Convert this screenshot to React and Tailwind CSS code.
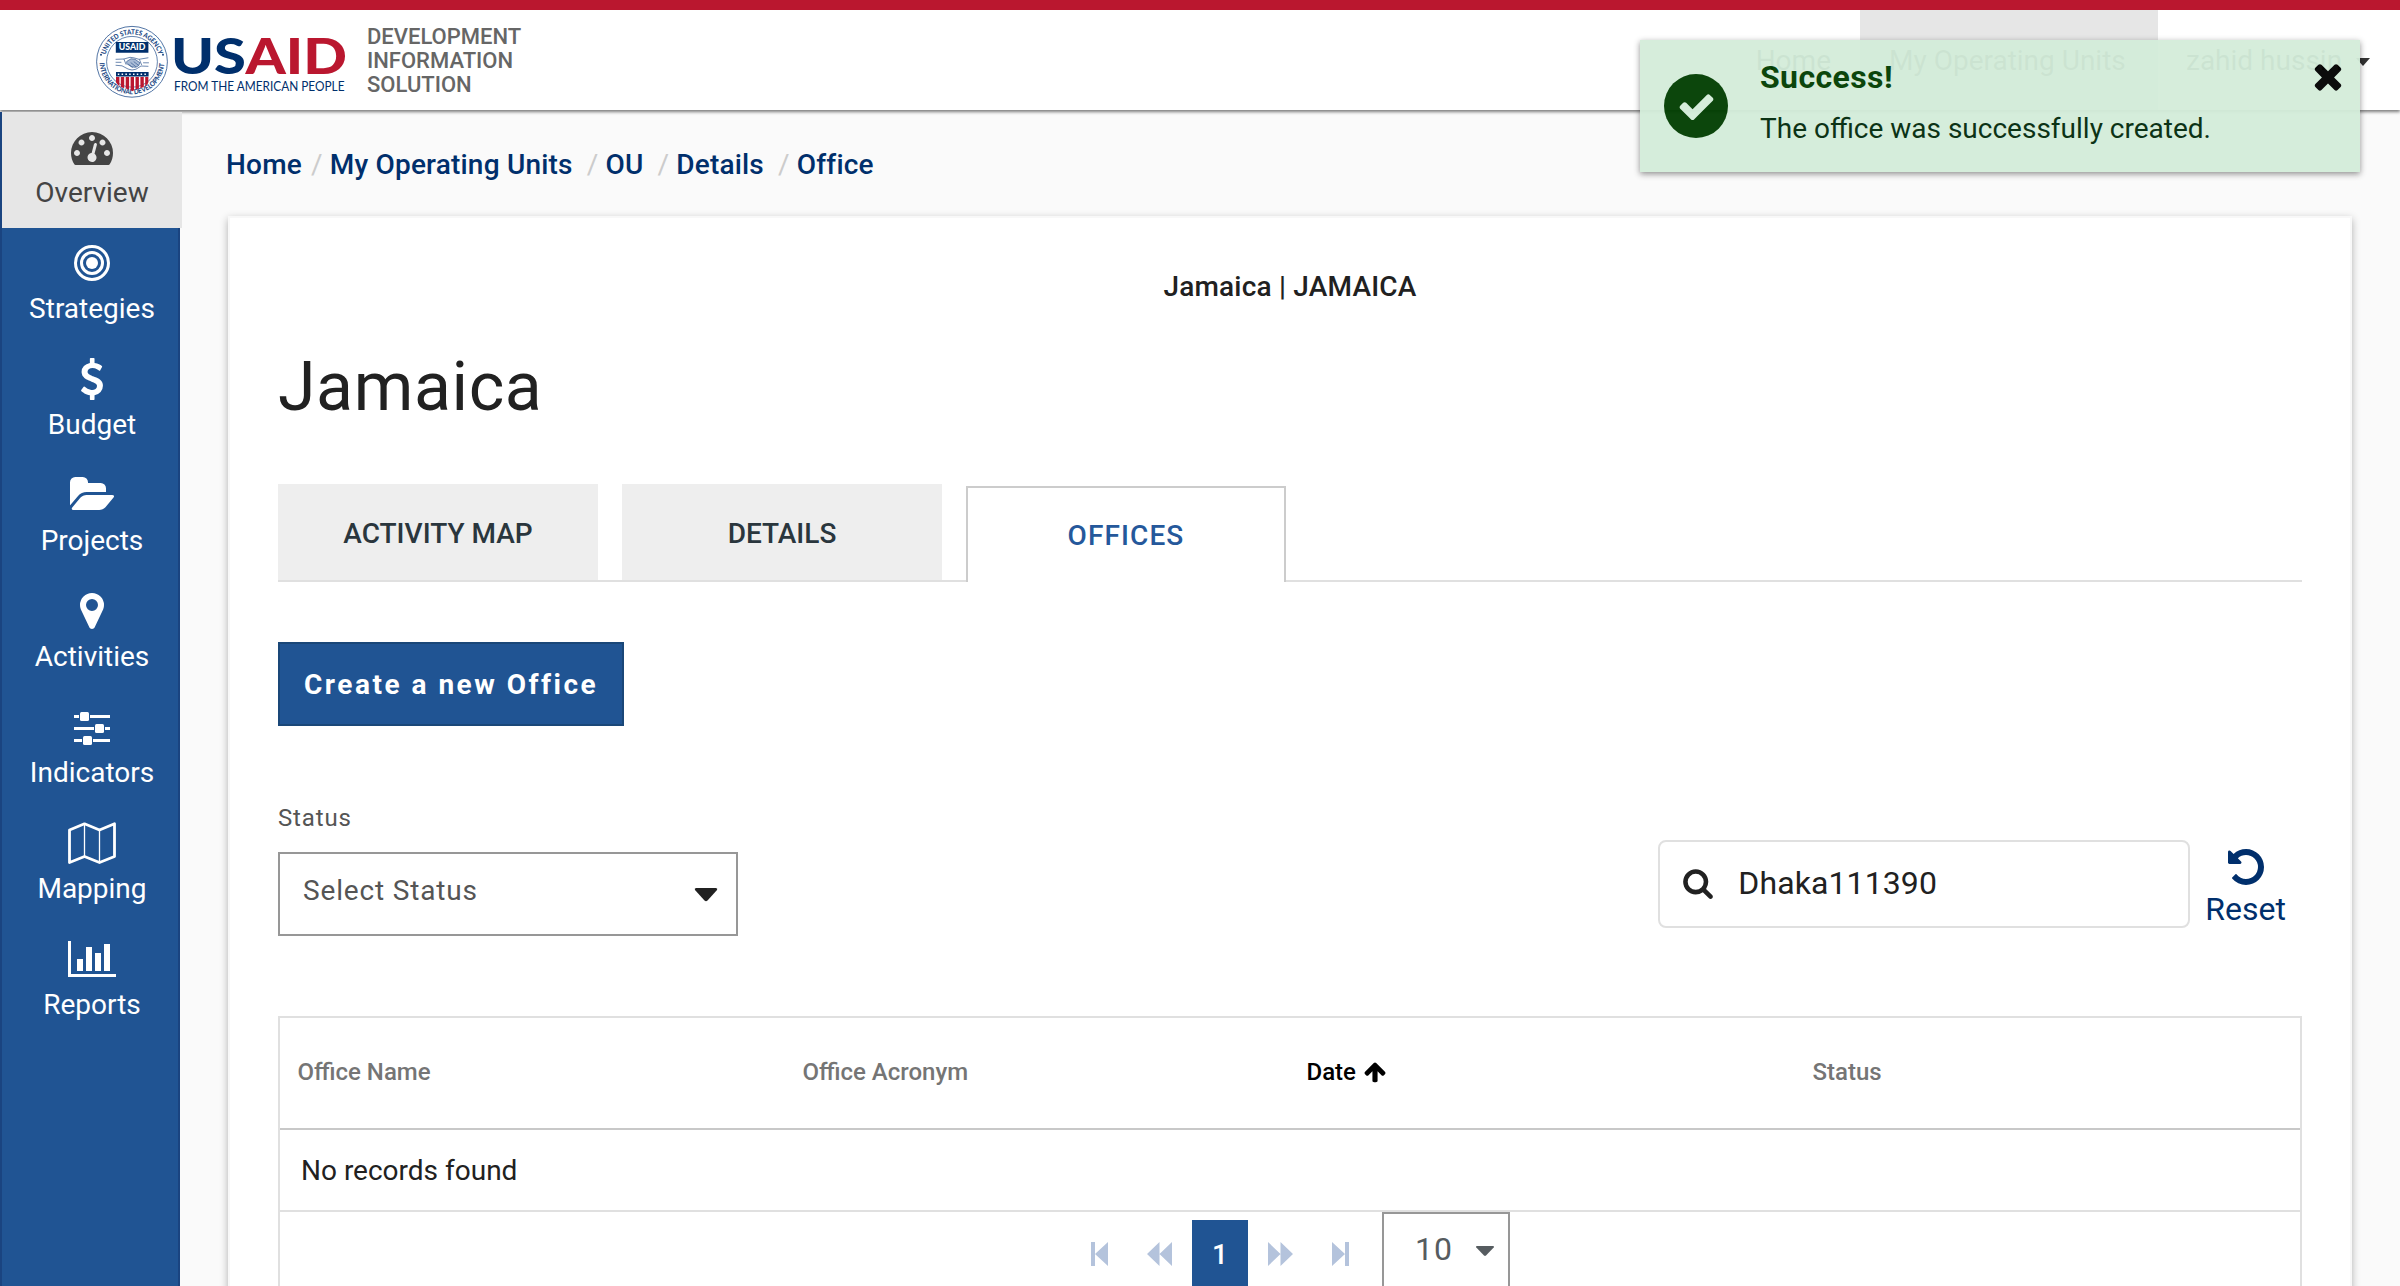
import React from "react";

const FA = {
  tachometer: "M384 1152q0-53-37.5-90.5t-90.5-37.5-90.5 37.5-37.5 90.5 37.5 90.5 90.5 37.5 90.5-37.5 37.5-90.5zm192-448q0-53-37.5-90.5t-90.5-37.5-90.5 37.5-37.5 90.5 37.5 90.5 90.5 37.5 90.5-37.5 37.5-90.5zm428 481l101-382q6-26-7.5-48.5t-38.5-29.5-48 6.5-30 39.5l-101 382q-60 5-107 43.5t-63 98.5q-20 77 20 146t117 89 146-20 89-117q16-60-6-117t-72-91zm660-33q0-53-37.5-90.5t-90.5-37.5-90.5 37.5-37.5 90.5 37.5 90.5 90.5 37.5 90.5-37.5 37.5-90.5zm-640-640q0-53-37.5-90.5t-90.5-37.5-90.5 37.5-37.5 90.5 37.5 90.5 90.5 37.5 90.5-37.5 37.5-90.5zm448 192q0-53-37.5-90.5t-90.5-37.5-90.5 37.5-37.5 90.5 37.5 90.5 90.5 37.5 90.5-37.5 37.5-90.5zm320 448q0 261-141 483-19 29-54 29h-1402q-35 0-54-29-141-221-141-483 0-182 71-348t191-286 286-191 348-71 348 71 286 191 191 286 71 348z",
  dollar: "M1362 1185q0 153-99.5 263.5t-258.5 136.5v175q0 14-9 23t-23 9h-135q-13 0-22.5-9.5t-9.5-22.5v-175q-66-9-127.5-31t-101.5-44.5-74-48-46.5-37.5-17.5-18q-17-21-2-41l103-135q7-10 23-12 15-2 24 9l2 2q113 99 243 125 37 8 74 8 81 0 142.5-43t61.5-122q0-28-15-53t-33.5-42-58.5-37.5-66-32-80-32.5q-39-16-61.5-25t-61.5-26.5-62.5-31-56.5-35.5-53.5-42.5-43.5-49-35.5-58-21-66.5-8.5-78q0-138 98-242t255-134v-180q0-13 9.5-22.5t22.5-9.5h135q14 0 23 9t9 23v176q57 6 110.5 23t87 33.5 63.5 37.5 39 29 15 14q17 18 5 38l-81 146q-8 15-23 16-14 3-27-7-3-3-14.5-12t-39-26.5-58.5-32-74.5-26-85.5-11.5q-95 0-155 43t-60 111q0 26 8.5 48t29.5 41.5 39.5 33 56 31 60.5 27 70 27.5q53 20 81 31.5t76 35 75.5 42.5 62 50 53 63.5 31.5 76.5 13 94z",
  folder: "M1815 952q0 31-31 66l-336 396q-43 51-120.5 86.5t-143.5 35.5h-1088q-34 0-60.5-13t-26.5-43q0-31 31-66l336-396q43-51 120.5-86.5t143.5-35.5h1088q34 0 60.5 13t26.5 43zm-343-344v160h-832q-94 0-197 47.5t-164 119.5l-337 396-5 6q0-4-.5-12.5t-.5-12.5v-960q0-92 66-158t158-66h320q92 0 158 66t66 158v32h544q92 0 158 66t66 158z",
  marker: "M1152 640q0-106-75-181t-181-75-181 75-75 181 75 181 181 75 181-75 75-181zm256 0q0 109-33 179l-364 774q-16 33-47.5 52t-67.5 19-67.5-19-46.5-52l-365-774q-33-70-33-179 0-212 150-362t362-150 362 150 150 362z",
  chart: "M640 896v512h-256v-512h256zm384-512v1024h-256v-1024h256zm1024 1152v128h-2048v-1536h128v1408h1920zm-640-896v768h-256v-768h256zm384-384v1152h-256v-1152h256z",
  search: "M1216 832q0-185-131.5-316.5t-316.5-131.5-316.5 131.5-131.5 316.5 131.5 316.5 316.5 131.5 316.5-131.5 131.5-316.5zm512 832q0 52-38 90t-90 38q-54 0-90-38l-343-342q-179 124-399 124-143 0-273.5-55.5t-225-150-150-225-55.5-273.5 55.5-273.5 150-225 225-150 273.5-55.5 273.5 55.5 225 150 150 225 55.5 273.5q0 220-124 399l343 343q37 37 37 90z",
  undo: "M1664 896q0 156-61 298t-164 245-245 164-298 61q-172 0-327-72.5t-264-204.5q-7-10-6.5-22.5t8.5-20.5l137-138q10-9 25-9 16 2 23 12 73 95 179 147t225 52q104 0 198.5-40.5t163.5-109.5 109.5-163.5 40.5-198.5-40.5-198.5-109.5-163.5-163.5-109.5-198.5-40.5q-98 0-188 35.5t-160 101.5l137 138q31 30 14 69-17 40-59 40h-448q-26 0-45-19t-19-45v-448q0-42 40-59 39-17 69 14l130 129q107-101 244.5-156.5t284.5-55.5q156 0 298 61t245 164 164 245 61 298z",
  check: "M1671 566q0 40-28 68l-724 724-136 136q-28 28-68 28t-68-28l-136-136-362-362q-28-28-28-68t28-68l136-136q28-28 68-28t68 28l294 295 656-657q28-28 68-28t68 28l136 136q28 28 28 68z",
  times: "M1490 1322q0 40-28 68l-136 136q-28 28-68 28t-68-28l-294-294-294 294q-28 28-68 28t-68-28l-136-136q-28-28-28-68t28-68l294-294-294-294q-28-28-28-68t28-68l136-136q28-28 68-28t68 28l294 294 294-294q28-28 68-28t68 28l136 136q28 28 28 68t-28 68l-294 294 294 294q28 28 28 68z",
  arrowUp: "M1675 971q0 51-37 90l-75 75q-38 38-91 38-54 0-90-38l-294-293v704q0 52-37.5 84.5t-90.5 32.5h-128q-53 0-90.5-32.5t-37.5-84.5v-704l-294 293q-36 38-90 38t-90-38l-75-75q-38-38-38-90 0-53 38-91l651-651q35-37 90-37 54 0 91 37l651 651q37 39 37 91z",
};

function Glyph({ name, className, viewBox = "0 0 1792 1792" }) {
  return (
    <svg viewBox={viewBox} className={className} fill="currentColor">
      <path d={FA[name]} />
    </svg>
  );
}

function Strategies() {
  return (
    <svg viewBox="0 0 42 42" className="h-[42px] w-[42px]" fill="none" stroke="currentColor" strokeWidth="3">
      <circle cx="21" cy="21" r="16.5" />
      <circle cx="21" cy="21" r="10.5" />
      <circle cx="21" cy="21" r="6" fill="currentColor" stroke="none" />
    </svg>
  );
}

function Indicators() {
  return (
    <svg viewBox="0 0 36 42" className="h-[42px] w-9" fill="currentColor">
      <path d="M0 9h5v3H0zM16 9h20v3H16zM0 21h20v3H0zM31 21h5v3h-5zM0 33h8v3H0zM19 33h17v3H19z" />
      <rect x="6" y="6" width="9" height="9" rx="1.5" />
      <rect x="21" y="18" width="9" height="9" rx="1.5" />
      <rect x="9" y="30" width="9" height="9" rx="1.5" />
    </svg>
  );
}

function MapIcon() {
  return (
    <svg viewBox="0 0 48 42" className="h-[42px] w-12" fill="none" stroke="currentColor">
      <path strokeWidth="2.8" strokeLinejoin="round" d="M1.5 8 16.5 1.8 31.5 8 46.5 1.8V34.5L31.5 40.5 16.5 34.5 1.5 40.5z" />
      <path strokeWidth="1.3" d="M16.5 2v32M31.5 8v32" />
    </svg>
  );
}

const NAV = [
  { label: "Overview", active: true, icon: <Glyph name="tachometer" className="h-[42px] w-[42px]" /> },
  { label: "Strategies", icon: <Strategies /> },
  { label: "Budget", icon: <Glyph name="dollar" className="h-[42px] w-[42px]" /> },
  { label: "Projects", icon: <Glyph name="folder" viewBox="-64 0 1920 1792" className="h-[42px] w-[45px]" /> },
  { label: "Activities", icon: <Glyph name="marker" className="h-[42px] w-[42px]" /> },
  { label: "Indicators", icon: <Indicators /> },
  { label: "Mapping", icon: <MapIcon /> },
  { label: "Reports", icon: <Glyph name="chart" viewBox="0 0 2048 1792" className="h-[42px] w-12" /> },
];

function Logo() {
  return (
    <svg viewBox="0 0 256 76" className="h-[76px] w-[256px]">
      <defs>
        <path id="sealTop" d="M10.6 38a27.4 27.4 0 0 1 54.800 0" />
        <path id="sealBottom" d="M5.600 38a32.400 32.400 0 0 0 64.800 0" />
        <clipPath id="shield"><path d="M22 53h32.600v5.500q-2 4.500-8.500 6-5.500 1-7.800 3-2.300-2-7.800-3-6.500-1.500-8.500-6z" /></clipPath>
      </defs>
      <g transform="translate(-2 -.2)">
        <circle cx="38" cy="38" r="35.4" fill="#fff" stroke="#3d649a" strokeWidth=".9" />
        <circle cx="38" cy="38" r="25.400" fill="none" stroke="#3d649a" strokeWidth=".8" />
        <g fill="#1d4a86" className="font-['Lato',sans-serif] text-[7px] font-black">
          <text>
            <textPath href="#sealTop" startOffset="7" textLength="72" lengthAdjust="spacingAndGlyphs">UNITED STATES AGENCY</textPath>
          </text>
          <text>
            <textPath href="#sealBottom" startOffset="1" textLength="99" lengthAdjust="spacingAndGlyphs">INTERNATIONAL DEVELOPMENT</textPath>
          </text>
          <circle cx="7" cy="31" r="1" />
          <circle cx="69" cy="31" r="1" />
        </g>
        <path d="M21.800 18.300h32.600V29H21.800z" fill="#002f6c" />
        <text x="24.800" y="26.700" textLength="26.600" lengthAdjust="spacingAndGlyphs" fill="#fff" className="font-['Lato',sans-serif] text-[8.500px] font-black">USAID</text>
        <g fill="none" stroke="#47699c" strokeWidth=".8" strokeLinecap="round" strokeLinejoin="round">
          <path d="M22 35.500l8-.3 6-1.700 4 .6 5 1.400 9-1.500M22 41.500l6 .5 6 3.200 4 1 4-.8 5-3.200 7 .3" />
          <path d="M22 38.500h5M49.500 39h5M30 35.500l2 5M45.500 35.800l2 5" />
          <path fill="#a9bbd6" d="M33 37.500l4-2.500 4 .5 5 3.500-1.500 3-3 1.500-4-.5-4.500-3z" />
          <path d="M34.500 40.500l4 3M37 39l5 4M40 38l4.500 3.500" />
        </g>
        <path d="M22 48.300h32.600v4.500H22z" fill="#002f6c" />
        <path d="M23.800 50.500h30" stroke="#fff" strokeWidth="1.400" strokeDasharray="1.500 2.300" />
        <path clipPath="url(#shield)" d="M22 53h3.400v16H22zM26.800 53h3.400v16h-3.400zM31.700 53h3.400v16h-3.400zM36.600 53h3.400v16h-3.400zM41.500 53h3.400v16h-3.400zM46.400 53h3.400v16h-3.400zM51.200 53h3.400v16h-3.400z" fill="#ba172f" />
      </g>
      <g className="font-['Lato',sans-serif] font-black">
        <text x="75" y="50.400" textLength="75" lengthAdjust="spacingAndGlyphs" fill="#002f6c" className="text-[49.500px]">US</text>
        <text x="149.500" y="50.400" textLength="101.500" lengthAdjust="spacingAndGlyphs" fill="#ba172f" className="text-[49.500px]">AID</text>
      </g>
      <text x="78" y="67" textLength="170.500" lengthAdjust="spacingAndGlyphs" fill="#002f6c" className="font-['Lato',sans-serif] text-[12.500px]">FROM THE AMERICAN PEOPLE</text>
    </svg>
  );
}

function Header() {
  return (
    <header className="relative z-10 flex h-[110px] border-t-[10px] border-[#ba172f] bg-white pl-24 shadow-[0_2px_3px_rgba(0,0,0,0.5)]">
      <div className="pt-[14px]"><Logo /></div>
      <div className="ml-[15px] pt-[15px] text-[22px] leading-6 font-medium text-[#666]">
        DEVELOPMENT<br />INFORMATION<br />SOLUTION
      </div>
      <nav className="ml-auto flex text-[28px] leading-[33px] whitespace-nowrap text-[#333]">
        <div className="pt-[34px] pr-[29px]">Home</div>
        <div className="w-[298px] bg-[#e6e6e6] pt-[34px] pl-[29px]">My Operating Units</div>
        <div className="flex w-[242px] pt-[34px] pl-7">
          zahid hussin
          <svg viewBox="0 0 14 8" className="mt-[14px] ml-[14px] h-2 w-[14px]" fill="#333"><path d="M0 0h14L7 8z" /></svg>
        </div>
      </nav>
    </header>
  );
}

function Toast() {
  return (
    <div className="absolute top-10 left-[1640px] z-20 flex h-[132px] w-[720px] bg-[#d4edda] opacity-95 shadow-[0_2px_6px_rgba(0,0,0,0.45)]">
      <div className="mt-[34px] ml-6 flex h-16 w-16 items-center justify-center rounded-full bg-[#003d00]">
        <Glyph name="check" className="h-[39px] w-[39px] text-[#d4edda]" />
      </div>
      <div className="ml-8">
        <div className="mt-[18px] text-[32px] leading-[38px] font-bold tracking-[0.4px] text-[#003d00]">Success!</div>
        <div className="mt-[16px] text-[28px] leading-[33px] text-[#00290a]">The office was successfully created.</div>
      </div>
      <Glyph name="times" className="mt-4 mr-3 ml-auto h-10 w-10 text-black" />
    </div>
  );
}

function Sidebar() {
  return (
    <aside className="w-[180px] shrink-0 border-x-2 border-[#1a4480] bg-[#205493]">
      {NAV.map((n) => (
        <div
          key={n.label}
          className={
            "flex h-[116px] w-[180px] flex-col items-center pt-[14px] " + (n.active ? "bg-[#e6e6e6] text-[#444]" : "text-white")
          }
        >
          {n.icon}
          <div className="mt-2 text-[28px] leading-[33px]">{n.label}</div>
        </div>
      ))}
    </aside>
  );
}

function Slash({ first }) {
  return <span className={first ? "mr-[7px] ml-[9px] font-normal text-[#ccc]" : "mr-[7px] ml-[14px] font-normal text-[#ccc]"}>/</span>;
}

function Breadcrumbs() {
  return (
    <div className="flex h-[33px] text-[28px] leading-[33px] font-medium tracking-[0.2px] text-[#002f6c]">
      <span>Home</span><Slash first />
      <span>My Operating Units</span><Slash />
      <span>OU</span><Slash />
      <span>Details</span><Slash />
      <span>Office</span>
    </div>
  );
}

function Tabs() {
  return (
    <div className="flex h-[98px] items-end gap-6 border-b-2 border-[#e0e0e0] text-[28px] leading-[33px] font-medium text-[#2a363d]">
      <div className="h-24 w-80 bg-[#eee] pt-[33px] text-center">ACTIVITY MAP</div>
      <div className="h-24 w-80 bg-[#eee] pt-[33px] text-center">DETAILS</div>
      <div className="-mb-[2px] h-24 w-80 border-2 border-b-0 border-[#ccc] bg-white pt-[31px] text-center tracking-[1.1px] text-[#25589b]">OFFICES</div>
    </div>
  );
}

function Filters() {
  return (
    <div className="mt-[78px] flex h-[132px]">
      <div className="w-[460px]">
        <div className="text-2xl leading-7 tracking-[0.85px] text-[#555]">Status</div>
        <div className="mt-5 flex h-[84px] border-2 border-[#979797] pl-[23px] text-[28px] leading-[33px] tracking-[0.84px] text-[#555]">
          <span className="mt-5">Select Status</span>
          <svg viewBox="0 0 24 14" className="mt-[34px] mr-[18px] ml-auto h-[14px] w-6" fill="#212121">
            <path d="M2 0h20q2 .5 1 2L13.500 12.500q-1.500 1.300-3 0L1 2Q0 .5 2 0z" />
          </svg>
        </div>
      </div>
      <div className="mt-9 ml-auto flex h-[88px] w-[532px] rounded-lg border-2 border-[#e0e0e0] pl-[22px] text-[32px] leading-[38px] text-[#212121]">
        <Glyph name="search" className="mt-[25px] h-8 w-8" />
        <span className="mt-[22px] ml-6 tracking-[0.1px]">Dhaka111390</span>
      </div>
      <div className="mt-[42px] mr-4 ml-[15px] flex flex-col items-center text-[32px] leading-[38px] text-[#002f6c]">
        <Glyph name="undo" className="h-[42px] w-[42px]" />
        <span className="mt-[2px]">Reset</span>
      </div>
    </div>
  );
}

function Pager() {
  return (
    <div className="flex h-[100px] text-[#b4c3dc]">
      <svg viewBox="0 0 17 24" className="mt-[30px] ml-[811px] h-6 w-[17px]" fill="currentColor"><path d="M0 0h4v24H0zM17 0v24L4 12z" /></svg>
      <svg viewBox="0 0 25 24" className="mt-[30px] ml-[39px] h-6 w-[25px]" fill="currentColor"><path d="M12.500 0v24L0 12zM25 0v24L12.500 12z" /></svg>
      <div className="mt-2 ml-5 h-[92px] w-14 bg-[#205493] pt-[18px] text-center text-[28px] leading-[33px] font-medium text-white">1</div>
      <svg viewBox="0 0 25 24" className="mt-[30px] ml-5 h-6 w-[25px]" fill="currentColor"><path d="M0 0v24l12.500-12zM12.500 0v24L25 12z" /></svg>
      <svg viewBox="0 0 17 24" className="mt-[30px] ml-[39px] h-6 w-[17px]" fill="currentColor"><path d="M13 0h4v24h-4zM0 0v24l13-12z" /></svg>
      <div className="ml-[33px] flex w-32 border-2 border-b-0 border-[#979797] text-[32px] leading-[38px] tracking-[1px] text-[#565c60]">
        <span className="mt-4 ml-[31px]">10</span>
        <svg viewBox="0 0 18 10" className="mt-8 mr-[14px] ml-auto h-[10px] w-[18px]" fill="currentColor"><path d="M1 0h16q1.500.3.700 1.500L10 9.500q-1 .9-2 0L.3 1.500Q-.5.3 1 0z" /></svg>
      </div>
    </div>
  );
}

function Table() {
  return (
    <div className="border-2 border-b-0 border-[#e0e0e0]">
      <div className="grid h-28 grid-cols-[505px_504px_506px_505px] border-b-2 border-[#c8c8c8] pt-10 text-2xl leading-7 font-medium text-[#757575]">
        <div className="pl-[17.5px]">Office Name</div>
        <div className="pl-[17.5px]">Office Acronym</div>
        <div className="flex pl-[17.5px] text-black">
          Date
          <Glyph name="arrowUp" className="mt-[2px] ml-[7px] h-6 w-6" />
        </div>
        <div className="pl-[17.5px]">Status</div>
      </div>
      <div className="h-[82px] border-b-2 border-[#e0e0e0] pt-6 pl-[21px] text-[28px] leading-[33px] text-[#212121]">No records found</div>
      <Pager />
    </div>
  );
}

export default function App() {
  return (
    <div className="relative h-[1286px] w-[2400px] overflow-hidden bg-[#fafafa] font-['Roboto',sans-serif]">
      <Header />
      <Toast />
      <div className="relative z-10 mt-[2px] flex h-[1174px]">
        <Sidebar />
        <main className="flex-1 pt-9 pr-12 pl-12">
          <div className="-ml-[2px]"><Breadcrumbs /></div>
          <section className="mt-[35px] h-[1100px] w-[2124px] border-2 border-[#f8f8f8] bg-white px-12 pt-[52px] shadow-[0_3px_8px_rgba(0,0,0,0.3)]">
            <div className="text-center text-[28px] leading-[33px] font-medium tracking-[0.2px] text-[#212121]">Jamaica | JAMAICA</div>
            <h1 className="mt-[44px] text-[68px] leading-[80px] tracking-[0.6px] text-[#212121]">Jamaica</h1>
            <div className="mt-[57px]"><Tabs /></div>
            <button className="mt-[60px] block h-[84px] w-[346px] border-2 border-[#1a4778] bg-[#205493] pl-6 text-left text-[28px] leading-[33px] font-bold tracking-[2.500px] whitespace-nowrap text-white">
              Create a new Office
            </button>
            <Filters />
            <div className="mt-20"><Table /></div>
          </section>
        </main>
      </div>
    </div>
  );
}
